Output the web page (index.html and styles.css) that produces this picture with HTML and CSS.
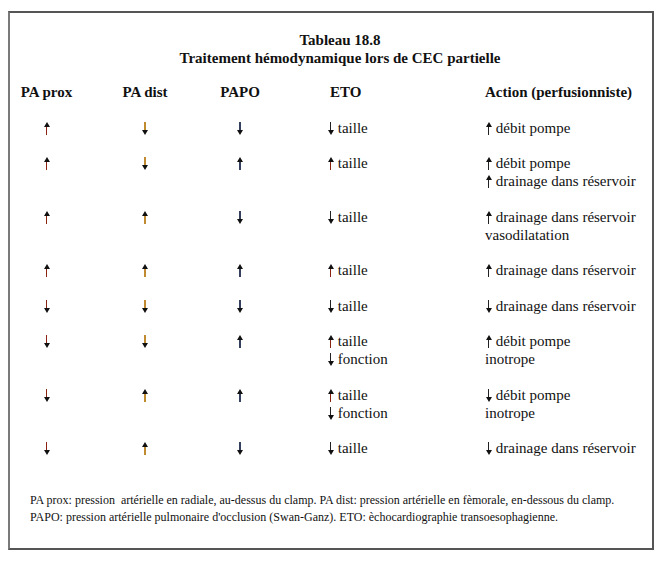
FILE: index.html
```html
<!DOCTYPE html>
<html lang="fr">
<head>
<meta charset="utf-8">
<title>Tableau 18.8</title>
<link rel="stylesheet" href="styles.css">
</head>
<body>
<div class="box">
  <div class="title">
    <div>Tableau 18.8</div>
    <div>Traitement hémodynamique lors de CEC partielle</div>
  </div>
  <div class="grid">
    <div class="h c">PA prox</div>
    <div class="h c">PA dist</div>
    <div class="h c">PAPO</div>
    <div class="h eto-h">ETO</div>
    <div class="h">Action (perfusionniste)</div>

    <div class="c"><span class="arr up red"></span></div>
    <div class="c"><span class="arr down gold"></span></div>
    <div class="c"><span class="arr down blue"></span></div>
    <div class="eto"><div><span class="arr down dark"></span> taille</div></div>
    <div><div><span class="arr up dark"></span> débit pompe</div></div>

    <div class="c"><span class="arr up red"></span></div>
    <div class="c"><span class="arr down gold"></span></div>
    <div class="c"><span class="arr up blue"></span></div>
    <div class="eto"><div><span class="arr up red"></span> taille</div></div>
    <div><div><span class="arr up dark"></span> débit pompe</div><div><span class="arr up dark"></span> drainage dans réservoir</div></div>

    <div class="c"><span class="arr up red"></span></div>
    <div class="c"><span class="arr up gold"></span></div>
    <div class="c"><span class="arr down blue"></span></div>
    <div class="eto"><div><span class="arr down dark"></span> taille</div></div>
    <div><div><span class="arr up dark"></span> drainage dans réservoir</div><div>vasodilatation</div></div>

    <div class="c"><span class="arr up red"></span></div>
    <div class="c"><span class="arr up gold"></span></div>
    <div class="c"><span class="arr up blue"></span></div>
    <div class="eto"><div><span class="arr up red"></span> taille</div></div>
    <div><div><span class="arr up dark"></span> drainage dans réservoir</div></div>

    <div class="c"><span class="arr down red"></span></div>
    <div class="c"><span class="arr down gold"></span></div>
    <div class="c"><span class="arr down blue"></span></div>
    <div class="eto"><div><span class="arr down dark"></span> taille</div></div>
    <div><div><span class="arr down dark"></span> drainage dans réservoir</div></div>

    <div class="c"><span class="arr down red"></span></div>
    <div class="c"><span class="arr down gold"></span></div>
    <div class="c"><span class="arr up blue"></span></div>
    <div class="eto"><div><span class="arr up red"></span> taille</div><div><span class="arr down dark"></span> fonction</div></div>
    <div><div><span class="arr up dark"></span> débit pompe</div><div>inotrope</div></div>

    <div class="c"><span class="arr down red"></span></div>
    <div class="c"><span class="arr up gold"></span></div>
    <div class="c"><span class="arr up blue"></span></div>
    <div class="eto"><div><span class="arr up red"></span> taille</div><div><span class="arr down dark"></span> fonction</div></div>
    <div><div><span class="arr down dark"></span> débit pompe</div><div>inotrope</div></div>

    <div class="c"><span class="arr down red"></span></div>
    <div class="c"><span class="arr up gold"></span></div>
    <div class="c"><span class="arr down blue"></span></div>
    <div class="eto"><div><span class="arr down dark"></span> taille</div></div>
    <div><div><span class="arr down dark"></span> drainage dans réservoir</div></div>
  </div>
  <div class="notes">
    <div>PA prox: pression&nbsp; artérielle en radiale, au-dessus du clamp. PA dist: pression artérielle en fèmorale, en-dessous du clamp.</div>
    <div>PAPO: pression artérielle pulmonaire d'occlusion (Swan-Ganz). ETO: èchocardiographie transoesophagienne.</div>
  </div>
</div>
</body>
</html>
```

FILE: styles.css
```css
html, body {
  margin: 0;
  padding: 0;
  background: #fff;
}

body {
  font-family: "Liberation Serif", "Tinos", "Times New Roman", "DejaVu Serif", serif;
  color: #111;
  font-size: 15px;
  line-height: 18px;
}

.box {
  margin: 11px 7px 0 8px;
  border: 2px solid #555;
  border-left-color: #7a7a7a;
  padding: 18px 0 22px 0;
}

.title {
  font-weight: bold;
  text-align: center;
  padding-left: 18px;
}

.grid {
  margin-top: 16px;
  padding-left: 10px;
  display: grid;
  grid-template-columns: 53px 144px 46px 222px 1fr;
  row-gap: 17.5px;
}

.h {
  font-weight: bold;
  white-space: nowrap;
}

.c {
  text-align: center;
}

.eto {
  padding-left: 64px;
}

.eto-h {
  padding-left: 67px;
}

.notes {
  margin-top: 34.5px;
  padding-left: 20px;
  font-size: 12px;
  line-height: 17px;
}

.arr {
  display: inline-block;
  position: relative;
  width: 7px;
  height: 13px;
  vertical-align: -2px;
}

.arr::before {
  content: "";
  position: absolute;
  left: 2.8px;
  width: 1.5px;
  background: currentColor;
}

.arr::after {
  content: "";
  position: absolute;
  left: 0.5px;
  width: 0;
  height: 0;
  border-left: 3px solid transparent;
  border-right: 3px solid transparent;
}

.up::before {
  top: 3px;
  bottom: 0;
}

.up::after {
  top: 0;
  border-bottom: 5px solid #111;
}

.down::before {
  top: 0;
  bottom: 3px;
}

.down::after {
  bottom: 0;
  border-top: 5px solid #111;
}

.red { color: #8a2410; }
.gold { color: #c08a30; }
.blue { color: #34405e; }
.dark { color: #222; }
```
